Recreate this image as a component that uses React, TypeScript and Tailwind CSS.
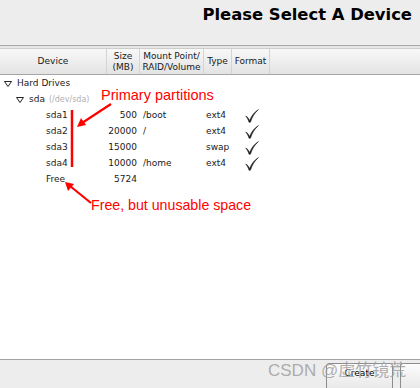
import React from "react";

type Part = {
  name: string;
  size: string;
  mount: string;
  type: string;
  format: boolean;
};

const parts: Part[] = [
  { name: "sda1", size: "500", mount: "/boot", type: "ext4", format: true },
  { name: "sda2", size: "20000", mount: "/", type: "ext4", format: true },
  { name: "sda3", size: "15000", mount: "", type: "swap", format: true },
  { name: "sda4", size: "10000", mount: "/home", type: "ext4", format: true },
  { name: "Free", size: "5724", mount: "", type: "", format: false },
];

const Expander = () => (
  <svg width="8" height="6" viewBox="0 0 8 6" className="mr-[5px]">
    <path d="M0.5 0.5 L7.5 0.5 L4 5.5 Z" fill="none" stroke="#222" strokeWidth="1" />
  </svg>
);

// calligraphic GTK style tick
const Check = () => (
  <svg width="14" height="14" viewBox="0 0 14 14">
    <path
      d="M0.8 7.2 C2.4 7.6 3.6 9.4 4.6 11.6 C6.6 6.6 9.6 3 13.4 0.6 C10 3.6 7.2 7.6 5.4 13.2 L4 13.2 C3.2 10.6 2.2 8.6 0.8 7.2 Z"
      fill="#222"
      stroke="#222"
      strokeWidth="0.6"
      strokeLinejoin="round"
    />
  </svg>
);

const HeaderCell = ({ w, children }: { w: string; children: React.ReactNode }) => (
  <div className={`${w} h-full flex items-center justify-center text-center leading-[11px] border-r border-[#d4d4d4]`}>
    {children}
  </div>
);

export default function App() {
  return (
    <div
      className="w-[420px] h-[388px] flex flex-col bg-white text-[#1a1a1a] overflow-hidden"
      style={{ fontFamily: '"DejaVu Sans", sans-serif' }}
    >
      <div className="h-[45px] bg-[#ededed] flex justify-end items-start pr-[8px] pt-[5px]">
        <h1 className="text-[16.4px] font-bold text-black leading-[20px]">Please Select A Device</h1>
      </div>
      <div className="h-px bg-[#a9a9a9]" />
      <div className="h-[3px] bg-[#e6e6e6] border-b border-[#cdcdcd]" />

      <div className="h-[26px] flex text-[9px] bg-gradient-to-b from-[#f8f8f8] to-[#e3e3e3] border-b border-[#a6a6a6]">
        <HeaderCell w="w-[107px]">Device</HeaderCell>
        <HeaderCell w="w-[33px]">
          Size
          <br />
          (MB)
        </HeaderCell>
        <HeaderCell w="w-[64px]">
          Mount Point/
          <br />
          RAID/Volume
        </HeaderCell>
        <HeaderCell w="w-[28px]">Type</HeaderCell>
        <HeaderCell w="w-[38px]">Format</HeaderCell>
        <div className="flex-1" />
      </div>

      <div className="relative flex-1 text-[9px] pt-[1px]">
        <div className="h-[16px] flex items-center pl-[4px]">
          <Expander />
          Hard Drives
        </div>
        <div className="h-[16px] flex items-center pl-[16px]">
          <Expander />
          sda
          <span className="ml-[4px] text-[8px] text-[#b0b0b0]">(/dev/sda)</span>
        </div>
        {parts.map((p) => (
          <div key={p.name} className="h-[16px] flex items-center">
            <div className="w-[107px] pl-[46px]">{p.name}</div>
            <div className="w-[33px] text-right pr-[3px]">{p.size}</div>
            <div className="w-[64px] pl-[3px]">{p.mount}</div>
            <div className="w-[28px] pl-[2px]">{p.type}</div>
            <div className="w-[38px] pl-[13px] flex items-center">{p.format && <Check />}</div>
          </div>
        ))}

        <svg
          className="absolute left-0 top-0 pointer-events-none"
          width="420"
          height="284"
          viewBox="0 75 420 284"
        >
          <line x1="72" y1="110" x2="72" y2="167" stroke="#f00" strokeWidth="2.5" />
          <line x1="111" y1="104" x2="82" y2="123" stroke="#f00" strokeWidth="2.2" />
          <path d="M77 127 L81 118 L86 125 Z" fill="#f00" />
          <line x1="91" y1="203" x2="70" y2="186" stroke="#f00" strokeWidth="2.2" />
          <path d="M65 182 L74 184 L68 191 Z" fill="#f00" />
        </svg>
        <span
          className="absolute left-[101px] top-[11px] text-[14.5px] leading-[18px] text-[#f00]"
          style={{ fontFamily: '"Liberation Sans", Arial, sans-serif' }}
        >
          Primary partitions
        </span>
        <span
          className="absolute left-[91px] top-[121px] text-[14.2px] leading-[18px] text-[#f00]"
          style={{ fontFamily: '"Liberation Sans", Arial, sans-serif' }}
        >
          Free, but unusable space
        </span>
      </div>

      <div className="relative h-[29px] bg-[#ededed] border-t border-[#a3a3a3] flex items-start justify-end pt-[3px] gap-[7px]">
        <button className="w-[67px] h-[30px] rounded-[3px] border border-[#8c8c8c] bg-gradient-to-b from-[#fcfcfc] to-[#e6e6e6] text-[9px] text-black pb-[8px]">
          Create
        </button>
        <button className="w-[20px] h-[30px] rounded-l-[3px] border border-r-0 border-[#8c8c8c] bg-gradient-to-b from-[#fcfcfc] to-[#e6e6e6]" />
        <span
          className="absolute left-[268px] top-[1px] text-[17px] leading-[20px] text-[#9a9a9a]/80 pointer-events-none"
          style={{ fontFamily: '"Liberation Sans", "Noto Sans CJK SC", sans-serif' }}
        >
          CSDN @虚竹镜荒
        </span>
      </div>
    </div>
  );
}
